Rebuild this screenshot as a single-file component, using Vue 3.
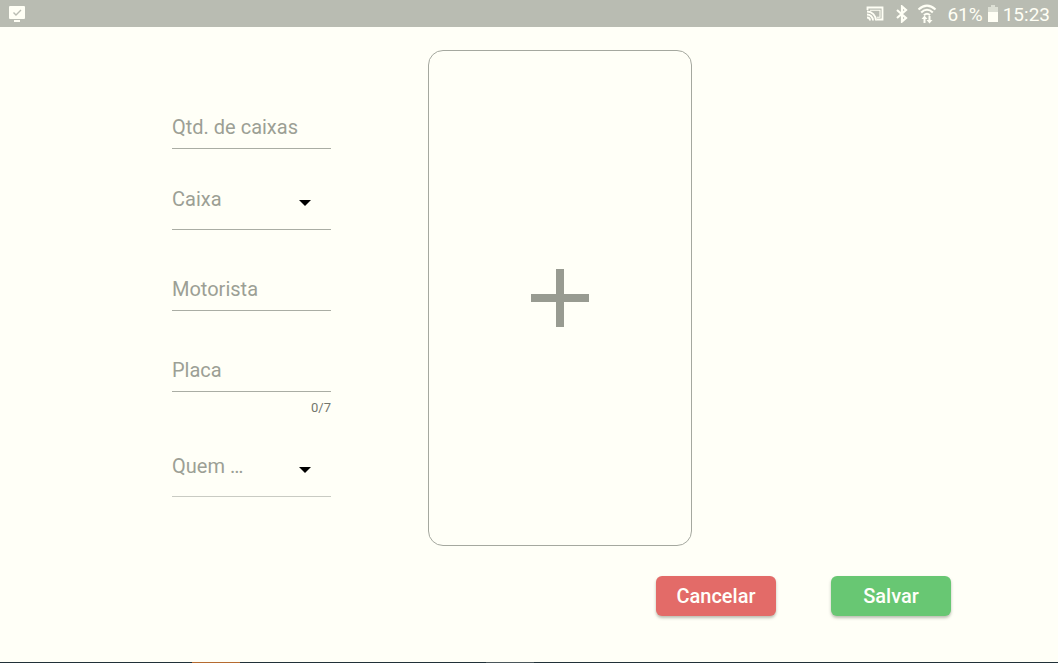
<script setup>
import { reactive } from 'vue'

const form = reactive({ quantidade: '', caixa: '', motorista: '', placa: '', quem: '' })
</script>

<template>
  <div class="screen">
    <header class="status">
      <svg class="notice" width="18" height="16" viewBox="0 0 18 16" aria-hidden="true">
        <rect x="1" y="0" width="16" height="13" rx="1" fill="#fffff5" />
        <rect x="6" y="14" width="6" height="2" fill="#fffff5" />
        <path d="M5.5 6.5l2.5 2.5l5-5" fill="none" stroke="#b9bcb2" stroke-width="1.4" />
      </svg>
      <div class="indicators">
        <svg width="18" height="16" viewBox="0 0 18 16" fill="none" stroke="#fffff5" aria-hidden="true">
          <path d="M1.5 4V1.5h15v12h-6" stroke-width="1.8" />
          <path d="M4 4.2h10v7h-3" stroke-width="1.1" />
          <path d="M1 5.5a9 9 0 0 1 9 9M1 8.5a6 6 0 0 1 6 6M1 11.5a3 3 0 0 1 3 3" stroke-width="1.8" />
        </svg>
        <svg class="bluetooth" width="12" height="18" viewBox="0 0 12 18" fill="none" stroke="#fffff5" stroke-width="2.2" aria-hidden="true">
          <path d="M1 5l9 8l-4 3.5V1.5l4 3.5l-9 8" />
        </svg>
        <svg class="wifi" width="20" height="20" viewBox="0 0 20 20" fill="none" stroke="#fffff5" aria-hidden="true">
          <path d="M1.5 5.5Q10-2.2 18.5 5.5M4.2 8.5Q10 3 15.8 8.5M7 11.2Q10 8.3 13 11.2" stroke-width="2.1" />
          <path d="M7.5 19v-5M12.5 12v5" stroke-width="2" />
          <path d="M4.5 15l3-3.6l3 3.6zM9.5 16l3 3.6l3-3.6z" fill="#fffff5" stroke="none" />
        </svg>
        <span class="percent">61%</span>
        <svg class="battery" width="10" height="17" viewBox="0 0 10 17" aria-hidden="true">
          <path d="M0 2h3V0h4v2h3v15H0z" fill="#dcdfd4" />
          <path d="M0 7h10v10H0z" fill="#fffff5" />
        </svg>
        <time>15:23</time>
      </div>
    </header>

    <form class="page" @submit.prevent>
      <div class="content">
        <div class="fields">
          <div class="field">
            <input v-model="form.quantidade" placeholder="Qtd. de caixas" aria-label="Qtd. de caixas" inputmode="numeric" />
          </div>
          <div class="field choice">
            <select v-model="form.caixa" aria-label="Caixa">
              <option value="">Caixa</option>
            </select>
            <svg class="arrow" width="12" height="6" viewBox="0 0 12 6" aria-hidden="true"><path d="M0 0h12L6 6z" /></svg>
          </div>
          <div class="field">
            <input v-model="form.motorista" placeholder="Motorista" aria-label="Motorista" />
          </div>
          <div class="field">
            <input v-model="form.placa" placeholder="Placa" aria-label="Placa" maxlength="7" />
          </div>
          <div class="counter">{{ form.placa.length }}/7</div>
          <div class="field choice last">
            <select v-model="form.quem" aria-label="Quem …">
              <option value="">Quem …</option>
            </select>
            <svg class="arrow" width="12" height="6" viewBox="0 0 12 6" aria-hidden="true"><path d="M0 0h12L6 6z" /></svg>
          </div>
        </div>
        <button type="button" class="photo" aria-label="Adicionar">
          <svg width="58" height="58" viewBox="0 0 58 58" aria-hidden="true">
            <path d="M25 0h8v25h25v8H33v25h-8V33H0v-8h25z" fill="#989b91" />
          </svg>
        </button>
      </div>
      <div class="actions">
        <button type="button" class="action cancel">Cancelar</button>
        <button type="submit" class="action save">Salvar</button>
      </div>
    </form>
    <footer class="strip"><span class="orange"></span><span class="gray"></span></footer>
  </div>
</template>

<style>
body {
  background: #fffff7;
}
</style>

<style scoped>
.screen {
  display: flex;
  flex-direction: column;
  min-height: 100vh;
  background: #fffff7;
  font-family: Roboto, sans-serif;
  font-size: 20px;
}
.status {
  display: flex;
  align-items: center;
  justify-content: space-between;
  height: 27px;
  padding: 0 8px;
  background: #b9bcb2;
  color: #fffff5;
}
.indicators {
  display: flex;
  align-items: center;
  font-size: 19px;
  line-height: 24px;
}
.bluetooth {
  margin-left: 12px;
}
.wifi {
  margin-left: 9px;
}
.percent {
  margin-left: 10px;
  padding-top: 3px;
}
.battery {
  margin: 0 5px;
}
time {
  padding-top: 3px;
}
.page {
  flex: 1;
}
.content {
  display: grid;
  grid-template-columns: 172fr 159fr 97fr 264fr 366fr;
  padding-top: 23px;
}
.fields {
  grid-column: 2;
  padding-top: 18px;
}
.field {
  box-sizing: border-box;
  display: flex;
  align-items: flex-end;
  height: 81px;
  border-bottom: 1px solid #aaada4;
}
.choice {
  display: grid;
  grid-template-columns: 1fr 32px;
  align-items: center;
  padding-top: 20px;
}
.last {
  border-color: #c9cbc3;
}
input,
select {
  box-sizing: border-box;
  width: 100%;
  min-width: 0;
  height: 42px;
  margin: 0;
  padding: 0;
  border: 0;
  outline: 0;
  background: transparent;
  color: #9c9f95;
  font: inherit;
  appearance: none;
}
select {
  grid-area: 1 / 1 / 2 / 3;
}
input::placeholder {
  color: #9c9f95;
  opacity: 1;
}
.arrow {
  grid-area: 1 / 2;
  margin-top: 8px;
  pointer-events: none;
}
.counter {
  height: 24px;
  line-height: 32px;
  color: #73766d;
  font-size: 13px;
  text-align: right;
}
.photo {
  grid-column: 4;
  display: flex;
  align-items: center;
  justify-content: center;
  height: 496px;
  padding: 0;
  border: 1px solid #a5a89f;
  border-radius: 15px;
  background: transparent;
}
.actions {
  display: flex;
  justify-content: flex-end;
  gap: 55px;
  padding: 30px 107px 16px 16px;
}
.action {
  width: 120px;
  height: 40px;
  padding: 0;
  border: 0;
  border-radius: 6px;
  box-shadow: 0 2px 3px rgba(60, 70, 50, 0.35);
  color: #fffffa;
  font: 500 20px Roboto, sans-serif;
}
.cancel {
  background: #e36b68;
}
.save {
  background: #68c773;
}
.strip {
  display: grid;
  grid-template-columns: 192fr 48fr 246fr 48fr 524fr;
  height: 1px;
  background: #203038;
}
.orange {
  grid-column: 2;
  background: #b56a30;
}
.gray {
  grid-column: 4;
  background: #4a565b;
}
</style>
